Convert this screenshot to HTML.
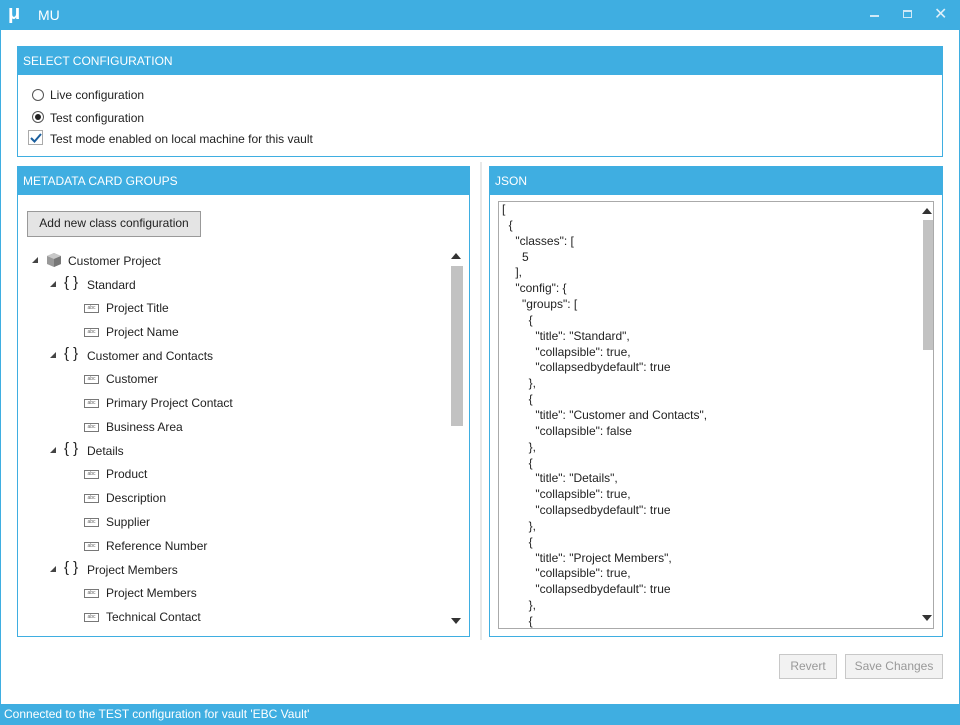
<!DOCTYPE html>
<html><head><meta charset="utf-8"><style>
*{margin:0;padding:0;box-sizing:border-box}
body{width:960px;height:725px;position:relative;background:#fff;font-family:"Liberation Sans",sans-serif;font-size:12px;color:#222;overflow:hidden}
.a{position:absolute}
.blue{background:#3faee1}
.panel{position:absolute;border:1px solid #3faee1;background:#fff}
.hdr{position:absolute;left:0;right:0;top:0;height:28px;background:#3faee1;color:#fff;font-size:12px;line-height:28px;padding-left:5px}
.row{position:absolute;white-space:nowrap;line-height:16px}
.tri{position:absolute;width:0;height:0;border-top:6px solid transparent;border-right:6px solid #444}
.abc{position:absolute;width:15px;height:9px;border:1px solid #777;font-size:5px;line-height:7px;text-align:center;color:#666}
.json div{height:15.85px;line-height:15.85px;white-space:pre}
.btn{position:absolute;border:1px solid #c8c8c8;background:#f2f2f2;color:#999;text-align:center;line-height:23px;font-size:12px}
</style></head><body>
<div class="a blue" style="left:0;top:0;width:960px;height:30px"></div>
<div class="a" style="left:8px;top:2px;color:#fff;font-size:20px;font-weight:bold">μ</div>
<div class="a" style="left:38px;top:7px;color:#fff;font-size:14px">MU</div>
<div class="a" style="left:870px;top:15px;width:9px;height:2px;background:#cfe9f7"></div>
<div class="a" style="left:903px;top:10px;width:9px;height:8px;border:1px solid #cfe9f7;border-top-width:2px"></div>
<div class="a" style="left:934px;top:4px;color:#dff0fa;font-size:16px">✕</div>
<div class="a" style="left:0;top:30px;width:1px;height:675px;background:#3faee1"></div>
<div class="a" style="right:0;top:30px;width:1px;height:675px;background:#3faee1"></div>

<div class="panel" style="left:17px;top:46px;width:926px;height:111px">
<div class="hdr">SELECT CONFIGURATION</div>
<div class="a" style="left:14px;top:42px;width:12px;height:12px;border:1px solid #555;border-radius:50%"></div>
<div class="row" style="left:32px;top:40px">Live configuration</div>
<div class="a" style="left:14px;top:64px;width:12px;height:12px;border:1px solid #555;border-radius:50%"></div>
<div class="a" style="left:17px;top:67px;width:6px;height:6px;background:#222;border-radius:50%"></div>
<div class="row" style="left:32px;top:63px">Test configuration</div>
<div class="a" style="left:10px;top:83px;width:15px;height:15px;border:1px solid #aaa"></div>
<svg class="a" style="left:12px;top:85px" width="12" height="12"><path d="M1 6 L4.5 9.5 L11 2" stroke="#1b5f9e" stroke-width="2" fill="none"/></svg>
<div class="row" style="left:32px;top:84px">Test mode enabled on local machine for this vault</div>
</div>

<div class="panel" style="left:17px;top:166px;width:453px;height:471px">
<div class="hdr">METADATA CARD GROUPS</div>
<div class="btn" style="left:9px;top:44px;width:174px;height:26px;color:#222;background:#e4e4e4;border-color:#999">Add new class configuration</div>
<div class="a" style="left:433px;top:86px;border-left:5px solid transparent;border-right:5px solid transparent;border-bottom:6px solid #333"></div>
<div class="a" style="left:433px;top:99px;width:12px;height:160px;background:#c2c2c2"></div>
<div class="a" style="left:433px;top:451px;border-left:5px solid transparent;border-right:5px solid transparent;border-top:6px solid #333"></div>
</div>
<div class="a" style="left:480px;top:162px;width:2px;height:478px;background:#e8e8e8"></div>

<!-- tree -->
<div class="tri" style="left:32px;top:257px"></div>
<svg class="a" style="left:46px;top:252px" width="16" height="16"><path d="M8 1 L15 4 L15 12 L8 15 L1 12 L1 4Z" fill="#999"/><path d="M8 1 L15 4 L8 7 L1 4Z" fill="#c8c8c8"/><path d="M8 7 L15 4 L15 12 L8 15Z" fill="#777"/></svg>
<div class="row" style="left:68px;top:253px">Customer Project</div>

<div class="tri" style="left:50px;top:281px"></div><div class="row" style="left:64px;top:275px;font-size:15px">{ }</div><div class="row" style="left:87px;top:277px">Standard</div>
<div class="abc" style="left:84px;top:304px">abc</div><div class="row" style="left:106px;top:300px">Project Title</div>
<div class="abc" style="left:84px;top:328px">abc</div><div class="row" style="left:106px;top:324px">Project Name</div>
<div class="tri" style="left:50px;top:352px"></div><div class="row" style="left:64px;top:346px;font-size:15px">{ }</div><div class="row" style="left:87px;top:348px">Customer and Contacts</div>
<div class="abc" style="left:84px;top:375px">abc</div><div class="row" style="left:106px;top:371px">Customer</div>
<div class="abc" style="left:84px;top:399px">abc</div><div class="row" style="left:106px;top:395px">Primary Project Contact</div>
<div class="abc" style="left:84px;top:423px">abc</div><div class="row" style="left:106px;top:419px">Business Area</div>
<div class="tri" style="left:50px;top:447px"></div><div class="row" style="left:64px;top:441px;font-size:15px">{ }</div><div class="row" style="left:87px;top:443px">Details</div>
<div class="abc" style="left:84px;top:470px">abc</div><div class="row" style="left:106px;top:466px">Product</div>
<div class="abc" style="left:84px;top:494px">abc</div><div class="row" style="left:106px;top:490px">Description</div>
<div class="abc" style="left:84px;top:518px">abc</div><div class="row" style="left:106px;top:514px">Supplier</div>
<div class="abc" style="left:84px;top:542px">abc</div><div class="row" style="left:106px;top:538px">Reference Number</div>
<div class="tri" style="left:50px;top:566px"></div><div class="row" style="left:64px;top:560px;font-size:15px">{ }</div><div class="row" style="left:87px;top:562px">Project Members</div>
<div class="abc" style="left:84px;top:589px">abc</div><div class="row" style="left:106px;top:585px">Project Members</div>
<div class="abc" style="left:84px;top:613px">abc</div><div class="row" style="left:106px;top:609px">Technical Contact</div>

<div class="panel" style="left:489px;top:166px;width:454px;height:471px">
<div class="hdr">JSON</div>
<div class="a" style="left:8px;top:34px;width:436px;height:428px;border:1px solid #aaa;overflow:hidden">
<div class="json a" style="left:3px;top:0px;font-size:12px">
<div>[</div><div>  {</div><div>    "classes": [</div><div>      5</div><div>    ],</div><div>    "config": {</div><div>      "groups": [</div><div>        {</div><div>          "title": "Standard",</div><div>          "collapsible": true,</div><div>          "collapsedbydefault": true</div><div>        },</div><div>        {</div><div>          "title": "Customer and Contacts",</div><div>          "collapsible": false</div><div>        },</div><div>        {</div><div>          "title": "Details",</div><div>          "collapsible": true,</div><div>          "collapsedbydefault": true</div><div>        },</div><div>        {</div><div>          "title": "Project Members",</div><div>          "collapsible": true,</div><div>          "collapsedbydefault": true</div><div>        },</div><div>        {</div>
</div>
<div class="a" style="left:423px;top:6px;border-left:5px solid transparent;border-right:5px solid transparent;border-bottom:6px solid #333"></div>
<div class="a" style="left:424px;top:18px;width:11px;height:130px;background:#c2c2c2"></div>
<div class="a" style="left:423px;top:413px;border-left:5px solid transparent;border-right:5px solid transparent;border-top:6px solid #333"></div>
</div>
</div>

<div class="btn" style="left:779px;top:654px;width:58px;height:25px">Revert</div>
<div class="btn" style="left:845px;top:654px;width:98px;height:25px">Save Changes</div>

<div class="a blue" style="left:0;top:704px;width:960px;height:21px"></div>
<div class="a" style="left:4px;top:707px;color:#fff;font-size:12px">Connected to the TEST configuration for vault 'EBC Vault'</div>
</body></html>
